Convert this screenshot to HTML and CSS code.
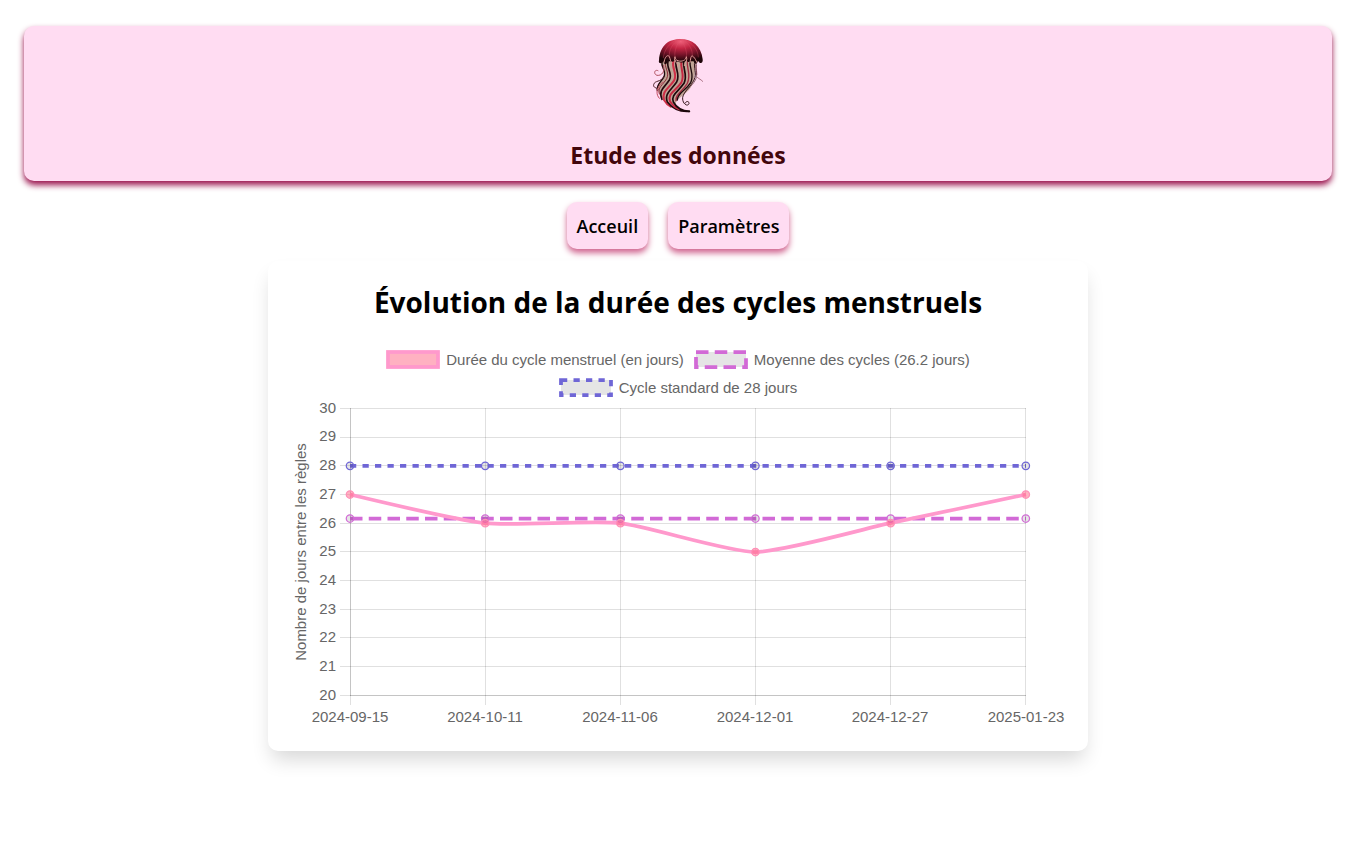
FILE: index.html
```html
<!DOCTYPE html>
<html lang="fr">
<head>
<meta charset="utf-8">
<meta name="viewport" content="width=device-width, initial-scale=1">
<title>Etude des données</title>
<link rel="stylesheet" href="styles.css">
</head>
<body>
<header class="banner">
  <svg class="logo" viewBox="36 24 156 225" aria-hidden="true">
    <defs>
      <radialGradient id="bell" cx="0.5" cy="0.1" r="0.8">
        <stop offset="0" stop-color="#f0607a"/>
        <stop offset="0.35" stop-color="#c22543"/>
        <stop offset="0.65" stop-color="#7a142a"/>
        <stop offset="1" stop-color="#1d0508"/>
      </radialGradient>
    </defs>
    <g fill="none" stroke-linecap="round">
      <path d="M64 92C60 116 80 124 70 142C58 158 46 166 56 186C62 206 84 220 108 232C100 212 126 200 140 186C160 170 164 146 168 92Z" fill="#c0a596"/>
      <path d="M66 94C62 112 80 122 72 140C64 156 48 164 52 182" stroke="#1d0a0c" stroke-width="4"/>
      <path d="M76 94C72 114 90 126 80 146C68 166 52 172 58 192" stroke="#8c2a3a" stroke-width="3"/>
      <path d="M84 94C78 116 100 130 88 150C74 172 54 180 66 208" stroke="#24090e" stroke-width="5"/>
      <path d="M100 94C94 116 114 130 102 152C86 176 64 184 72 210C78 220 84 226 92 230" stroke="#cf3048" stroke-width="6"/>
      <path d="M108 94C104 118 122 132 110 156C94 180 72 190 82 216C96 234 120 246 148 244" stroke="#210a0e" stroke-width="5"/>
      <path d="M124 94C120 118 136 134 124 158C108 182 82 190 90 214C98 228 108 234 118 238" stroke="#c42942" stroke-width="6"/>
      <path d="M131 94C128 118 144 134 132 160C114 186 92 194 100 216C110 234 126 243 148 244" stroke="#1b080b" stroke-width="5"/>
      <path d="M142 94C140 118 154 134 142 160C126 186 106 192 108 212" stroke="#a52b40" stroke-width="4"/>
      <path d="M150 94C148 116 164 134 152 158C138 182 112 188 112 210" stroke="#1b080b" stroke-width="4"/>
      <path d="M164 94C160 114 172 130 162 150C152 170 132 184 128 202C126 220 142 232 147 221C148 213 138 212 136 219" stroke="#35161c" stroke-width="3"/>
      <path d="M168 96C166 114 174 128 168 146C160 166 144 172 136 186" stroke="#5d3038" stroke-width="2"/>
      <path d="M70 106C76 124 66 138 51 136C39 132 44 116 54 122" stroke="#b0505f" stroke-width="3"/>
      <path d="M72 140C62 158 44 150 41 164C39 174 50 172 54 178" stroke="#4b2028" stroke-width="3"/>
      <path d="M68 156C46 176 48 194 58 205" stroke="#c54b60" stroke-width="3"/>
      <path d="M169 105C165 118 171 124 170 134" stroke="#6b2a38" stroke-width="2"/>
      <path d="M172 142C176 146 182 148 188 154" stroke="#7d3949" stroke-width="2"/>
    </g>
    <path d="M57 91C60 44 88 27 121 27C156 27 184 47 188 88C190 100 180 104 174 92C170 104 166 104 162 95C154 90 148 101 139 92C132 100 112 99 106 90C98 101 92 90 83 95C78 106 72 104 70 94C64 104 54 100 57 91Z" fill="url(#bell)"/>
    <g fill="none" stroke="#e09a96" stroke-width="2">
      <path d="M70 84C72 60 88 38 113 28M88 80C86 62 96 40 118 28M105 80C102 62 112 42 121 28M139 80C142 62 132 42 123 28M156 80C160 62 148 40 127 28M175 82C174 60 158 38 132 29" stroke="#e0536c" stroke-opacity="0.5"/>
      <path d="M72 98C74 80 84 72 88 80C92 88 90 94 96 98M105 80C100 98 112 94 113 108M105 80C104 98 138 98 139 80C144 96 132 96 133 108M150 98C152 88 152 72 160 80C166 86 168 92 171 98" stroke-width="3"/>
    </g>
  </svg>
  <h1 class="banner-title">Etude des données</h1>
</header>

<nav class="menu">
  <a class="menu-link" href="#accueil">Acceuil</a>
  <a class="menu-link" href="#parametres">Paramètres</a>
</nav>

<main class="card">
  <h2 class="card-title">Évolution de la durée des cycles menstruels</h2>
  <ul class="legend">
    <li class="legend-item">
      <svg class="swatch" viewBox="0 0 54 19" aria-hidden="true"><rect class="cycle-box" x="2" y="2" width="50" height="15"/></svg>
      Durée du cycle menstruel (en jours)
    </li>
    <li class="legend-item">
      <svg class="swatch" viewBox="0 0 54 19" aria-hidden="true"><rect class="average-box" x="2" y="2" width="50" height="15"/></svg>
      Moyenne des cycles (26.2 jours)
    </li>
    <li class="legend-item">
      <svg class="swatch" viewBox="0 0 54 19" aria-hidden="true"><rect class="standard-box" x="2" y="2" width="50" height="15"/></svg>
      Cycle standard de 28 jours
    </li>
  </ul>
  <svg class="chart" viewBox="0 0 770 325" role="img" aria-label="Nombre de jours entre les règles">
    <path class="grid" d="M47 7.5H733M47 36.5H733M47 64.5H733M47 93.5H733M47 122.5H733M47 150.5H733M47 179.5H733M47 208.5H733M47 236.5H733M47 265.5H733M47 294.5H733"/>
    <path class="grid" d="M57.5 7V304M192.5 7V304M327.5 7V304M462.5 7V304M597.5 7V304M732.5 7V304"/>
    <path class="grid" d="M57.5 7V295M57 294.5H733"/>
    <g class="tick tick-y">
      <text x="43" y="12">30</text><text x="43" y="40">29</text><text x="43" y="69">28</text>
      <text x="43" y="98">27</text><text x="43" y="127">26</text><text x="43" y="155">25</text>
      <text x="43" y="184">24</text><text x="43" y="213">23</text><text x="43" y="241">22</text>
      <text x="43" y="270">21</text><text x="43" y="299">20</text>
    </g>
    <g class="tick tick-x">
      <text x="57" y="321">2024-09-15</text><text x="192" y="321">2024-10-11</text>
      <text x="327" y="321">2024-11-06</text><text x="462" y="321">2024-12-01</text>
      <text x="597" y="321">2024-12-27</text><text x="733" y="321">2025-01-23</text>
    </g>
    <text class="tick tick-x" transform="translate(13 151) rotate(-90)">Nombre de jours entre les règles</text>
    <path class="standard" d="M57 64.8H733"/>
    <path class="average" d="M57 117.5H733"/>
    <path class="cycle" d="M57 93.5C57 93.5 165 119.3 192 122.2C219 125 300 119.3 327 122.2C354 125 435 151 462 151C489 151 570 128 597 122.2C624 116.5 733 93.5 733 93.5"/>
    <g class="dot-standard"><circle cx="57" cy="64.8" r="3.75"/><circle cx="192.2" cy="64.8" r="3.75"/><circle cx="327.4" cy="64.8" r="3.75"/><circle cx="462.4" cy="64.8" r="3.75"/><circle cx="597.6" cy="64.8" r="3.75"/><circle cx="732.8" cy="64.8" r="3.75"/></g>
    <g class="dot-average"><circle cx="57" cy="117.5" r="3.75"/><circle cx="192.2" cy="117.5" r="3.75"/><circle cx="327.4" cy="117.5" r="3.75"/><circle cx="462.4" cy="117.5" r="3.75"/><circle cx="597.6" cy="117.5" r="3.75"/><circle cx="732.8" cy="117.5" r="3.75"/></g>
    <g class="dot-cycle"><circle cx="57" cy="93.5" r="3.75"/><circle cx="192.2" cy="122.2" r="3.75"/><circle cx="327.4" cy="122.2" r="3.75"/><circle cx="462.4" cy="151" r="3.75"/><circle cx="597.6" cy="122.2" r="3.75"/><circle cx="732.8" cy="93.5" r="3.75"/></g>
  </svg>
</main>
</body>
</html>
```
FILE: styles.css
```css
* {
  box-sizing: border-box;
}

body {
  margin: 0;
  padding: 26px 24px;
  background: #fff;
  color: #000;
  font-family: "Segoe UI", "Open Sans", "Noto Sans", sans-serif;
}

.banner {
  display: flex;
  flex-direction: column;
  align-items: center;
  padding: 12px 16px 10px;
  border-radius: 10px;
  background: #ffdcf2;
  box-shadow: 0 4px 6px #99104b;
}

.logo {
  width: 52px;
  height: 75px;
}

.banner-title {
  margin: 26px 0 0;
  color: #43060c;
  font-size: 23px;
  font-weight: 700;
  line-height: 32px;
}

.menu {
  display: flex;
  justify-content: center;
  gap: 20px;
  margin-top: 21px;
}

.menu-link {
  padding: 11px 10px 9px;
  border-radius: 10px;
  background: #ffdcf2;
  box-shadow: 0 4px 6px #d0648f;
  color: #000;
  font-size: 18px;
  font-weight: 600;
  line-height: 27px;
  text-decoration: none;
}

.card {
  max-width: 820px;
  margin: 12px auto 0;
  padding: 20px 25px 25px;
  border-radius: 10px;
  background: #fff;
  box-shadow: 0 12px 20px -4px rgba(0, 0, 0, 0.16);
}

.card-title {
  margin: 0;
  font-size: 28px;
  font-weight: 700;
  line-height: 42px;
  text-align: center;
}

.legend {
  display: flex;
  flex-wrap: wrap;
  justify-content: center;
  gap: 9px 10px;
  margin: 27px 0 4px;
  padding: 0;
  color: #666;
  font: 15px/19px "Liberation Sans", Arial, sans-serif;
  list-style: none;
}

.legend-item {
  display: flex;
  align-items: center;
  gap: 6px;
}

.swatch {
  width: 54px;
  height: 19px;
}

.cycle-box,
.average-box,
.standard-box {
  fill: #e5e5e5;
  stroke-width: 3.75;
}

.cycle-box {
  fill: #ffb1c1;
  stroke: #ff99cc;
}

.average-box {
  stroke: #d26ad6;
  stroke-dasharray: 12.5 6.25;
}

.standard-box {
  stroke: #6f66d6;
  stroke-dasharray: 6.25 6.25;
}

.chart {
  display: block;
  width: 100%;
  height: auto;
  overflow: visible;
}

.grid {
  fill: none;
  stroke: rgba(0, 0, 0, 0.12);
}

.tick {
  fill: #666;
  font: 15px "Liberation Sans", Arial, sans-serif;
}

.tick-y {
  text-anchor: end;
}

.tick-x {
  text-anchor: middle;
}

.standard,
.average,
.cycle {
  fill: none;
  stroke-width: 3.75;
}

.standard {
  stroke: #6f66d6;
  stroke-dasharray: 6.25 6.25;
}

.average {
  stroke: #d26ad6;
  stroke-dasharray: 12.5 6.25;
}

.cycle {
  stroke: #ff99cc;
}

.dot-standard,
.dot-average {
  fill: rgba(0, 0, 0, 0.1);
  stroke: #6f66d6;
  stroke-width: 1.25;
}

.dot-average {
  stroke: #d26ad6;
}

.dot-cycle {
  fill: rgba(255, 99, 132, 0.5);
  stroke: #ff8fb8;
  stroke-width: 1.25;
}
```
